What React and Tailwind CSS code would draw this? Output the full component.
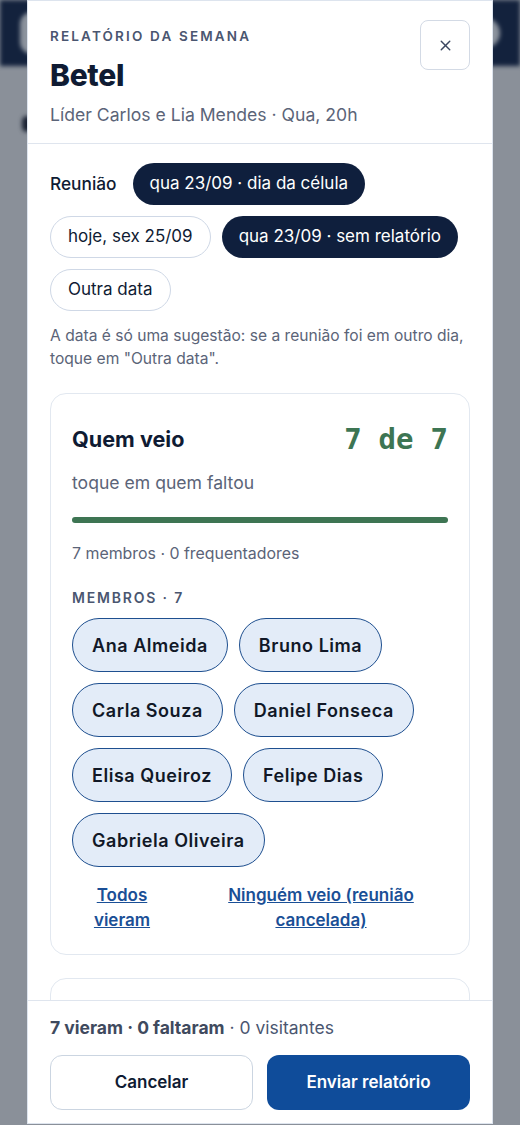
import { X } from 'lucide-react'

const MEMBROS = ['Ana Almeida', 'Bruno Lima', 'Carla Souza', 'Daniel Fonseca', 'Elisa Queiroz', 'Felipe Dias', 'Gabriela Oliveira']

function Chip({ ativo, children }) {
  return (
    <span
      className={`inline-flex h-[42px] items-center rounded-full px-[17px] text-[17px] ${
        ativo ? 'bg-[#0f1f3d] text-white' : 'border border-[#cfd8e6] bg-white text-[#0f1b33]'
      }`}
    >
      {children}
    </span>
  )
}

export default function App() {
  return (
    <div className="relative h-[1125px] w-full overflow-hidden bg-[#8a9099] font-['Inter',sans-serif]">
      {/* página por trás, desfocada */}
      <div className="flex h-[66px] items-center justify-between bg-[#13223d] px-[20px] blur-[2px]">
        <div className="h-[42px] w-[40px] rounded-xl bg-[#8c939d]" />
        <div className="h-[30px] w-[30px] rounded-full bg-[#8c939d]" />
      </div>
      <div className="px-[22px] pt-[50px] blur-[2px]">
        <div className="h-[16px] w-[10px] rounded-full bg-[#1a2233]" />
      </div>

      {/* modal */}
      <div className="absolute left-[27px] top-0 flex h-[1124px] w-[466px] flex-col border border-[#dde4ee] bg-white">
        <div className="flex items-start justify-between border-b border-[#dfe5ee] px-[22px] pb-[16px] pt-[19px]">
          <div className="pt-[7px]">
            <p className="text-[13.5px] font-semibold uppercase leading-[18px] tracking-[0.16em] text-[#4a5670]">
              Relatório da semana
            </p>
            <h1 className="mt-[12px] text-[30px] font-extrabold leading-[36px] tracking-[-0.01em] text-[#0f1b33]">Betel</h1>
            <p className="mt-[10px] text-[17.6px] leading-[24px] text-[#5b6478]">Líder Carlos e Lia Mendes · Qua, 20h</p>
          </div>
          <button className="flex h-[50px] w-[50px] items-center justify-center rounded-lg border border-[#d3dae5] text-[#3a4660]">
            <X size={17} strokeWidth={2} />
          </button>
        </div>

        <div className="flex-1 overflow-hidden px-[22px] pt-[19px]">
          <div className="flex flex-wrap items-center gap-[11px]">
            <span className="mr-[5px] text-[17.3px] font-medium text-[#0f1b33]">Reunião</span>
            <Chip ativo>qua 23/09 · dia da célula</Chip>
            <Chip>hoje, sex 25/09</Chip>
            <Chip ativo>qua 23/09 · sem relatório</Chip>
            <Chip>Outra data</Chip>
          </div>
          <p className="mt-[13px] text-[15.6px] leading-[23px] text-[#5b6478]">
            A data é só uma sugestão: se a reunião foi em outro dia, toque em "Outra data".
          </p>

          <div className="mt-[23px] rounded-2xl border border-[#e2e8f0] px-[21px] pb-[21px] pt-[27px]">
            <div className="flex items-center justify-between">
              <h2 className="text-[21.6px] font-bold text-[#0f1b33]">Quem veio</h2>
              <div className="flex gap-[17px] font-['DejaVu_Sans_Mono',monospace] text-[29px] font-bold leading-[36px] text-[#3d7553]">
                <span>7</span>
                <span>de</span>
                <span>7</span>
              </div>
            </div>
            <p className="mt-[14px] text-[17.6px] leading-[24px] text-[#5b6478]">toque em quem faltou</p>
            <div className="mt-[22px] h-[6px] rounded-full bg-[#3e7553]" />
            <p className="mt-[20px] text-[15.9px] leading-[22px] text-[#5b6478]">7 membros · 0 frequentadores</p>
            <p className="mt-[23px] text-[14px] font-semibold uppercase leading-[20px] tracking-[0.13em] text-[#4a5670]">
              Membros · 7
            </p>
            <div className="mt-[10px] flex flex-wrap gap-[11px]">
              {MEMBROS.map((nome) => (
                <span
                  key={nome}
                  className="inline-flex h-[54px] items-center rounded-full border-[1.5px] border-[#1e4f8f] bg-[#e3ecf8] px-[19px] text-[18px] font-semibold tracking-[0.03em] text-[#111827]"
                >
                  {nome}
                </span>
              ))}
            </div>
            <div className="mt-[16px] flex gap-[22px] text-[17px] font-semibold leading-[25px] text-[#1a4f96]">
              <button className="w-[100px] text-center underline">Todos vieram</button>
              <button className="flex-1 px-[30px] text-center underline">Ninguém veio (reunião cancelada)</button>
            </div>
          </div>

          <div className="mt-[23px] h-[60px] rounded-2xl border border-[#e2e8f0]" />
        </div>

        <div className="border-t border-[#dfe5ee] bg-white px-[22px] pb-[13px] pt-[15px]">
          <p className="text-[17.5px] leading-[24px] text-[#4a5670]">
            <span className="font-bold text-[#3f4a5e]">7 vieram · 0 faltaram</span> · 0 visitantes
          </p>
          <div className="mt-[15px] grid grid-cols-2 gap-[14px]">
            <button className="h-[55px] rounded-xl border border-[#cbd5e1] text-[17px] font-semibold text-[#0f1b33]">Cancelar</button>
            <button className="h-[55px] rounded-xl bg-[#0f4c9a] text-[17px] font-semibold text-white">Enviar relatório</button>
          </div>
        </div>
      </div>
    </div>
  )
}
